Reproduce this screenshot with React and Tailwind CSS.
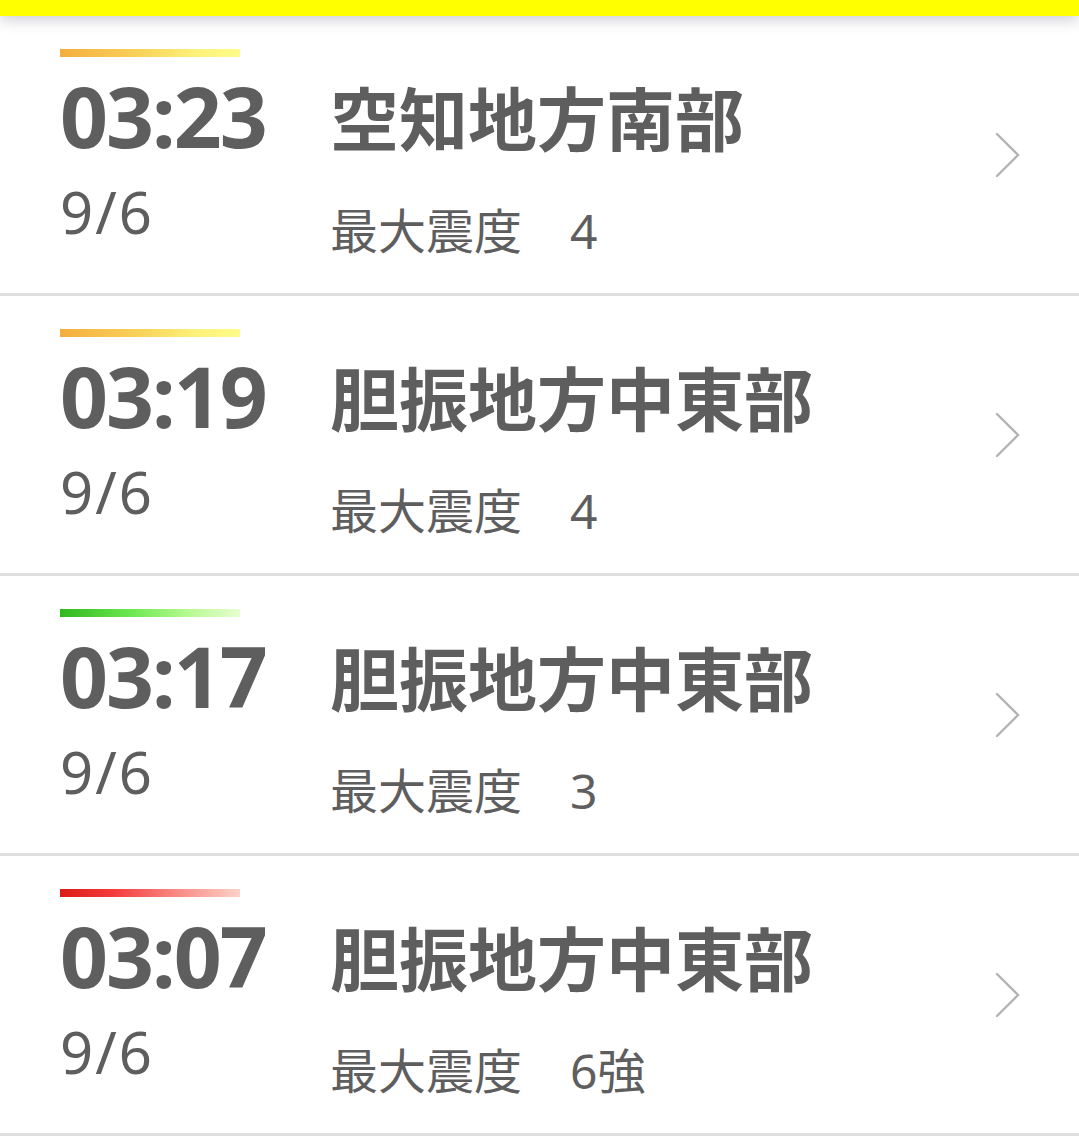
import React from "react";

const rows = [
  { time: "03:23", date: "9/6", place: "空知地方南部", level: "4", bar: "bg-[linear-gradient(90deg,#f4ae3d_0%,#f8d35a_45%,#fdf17a_75%,#fffb8a_100%)]" },
  { time: "03:19", date: "9/6", place: "胆振地方中東部", level: "4", bar: "bg-[linear-gradient(90deg,#f4ae3d_0%,#f8d35a_45%,#fdf17a_75%,#fffb8a_100%)]" },
  { time: "03:17", date: "9/6", place: "胆振地方中東部", level: "3", bar: "bg-[linear-gradient(90deg,#2fb81f_0%,#6ee850_40%,#b4f98e_70%,#e8fdd0_100%)]" },
  { time: "03:07", date: "9/6", place: "胆振地方中東部", level: "6強", bar: "bg-[linear-gradient(90deg,#dd1a1a_0%,#f43c3c_30%,#f98a84_65%,#fcd2c8_100%)]" },
];

function Row({ r }) {
  return (
    <div className="flex items-stretch h-[280px] border-b-[3px] border-[#dedede] bg-white">
      <div className="w-[330px] shrink-0 pl-[60px] pt-[33px] flex flex-col">
        <div className={`h-[8px] w-[180px] ${r.bar}`} />
        <div className="mt-[17px] text-[84px] leading-none font-bold tracking-[-2px] text-[#5e5e5e] [font-family:'Noto_Sans',sans-serif]">
          {r.time}
        </div>
        <div className="mt-[25px] text-[58px] leading-none tracking-[2px] text-[#5e5e5e] [font-family:'Noto_Sans',sans-serif]">
          {r.date}
        </div>
      </div>
      <div className="flex-1 flex flex-col pt-[66px]">
        <div className="text-[69px] leading-none font-bold text-[#5e5e5e] [font-family:'Noto_Sans_CJK_JP',sans-serif]">
          {r.place}
        </div>
        <div className="mt-[56px] text-[48px] leading-none text-[#5e5e5e] [font-family:'Noto_Sans','Noto_Sans_CJK_JP',sans-serif]">
          最大震度　{r.level}
        </div>
      </div>
      <div className="w-[120px] shrink-0 flex items-center justify-start pl-[36px]">
        <svg width="26" height="48" viewBox="0 0 26 48" fill="none">
          <polyline points="2,3 23,24 2,45" stroke="#b3b3b3" strokeWidth="2.4" strokeLinecap="round" strokeLinejoin="miter" />
        </svg>
      </div>
    </div>
  );
}

export default function App() {
  return (
    <div className="w-[1079px] h-[1142px] bg-white overflow-hidden relative">
      <div className="h-[16px] bg-[#ffff00] relative z-10 shadow-[0_4px_14px_rgba(80,80,100,0.28)]" />
      {rows.map((r, i) => (
        <Row key={i} r={r} />
      ))}
    </div>
  );
}
